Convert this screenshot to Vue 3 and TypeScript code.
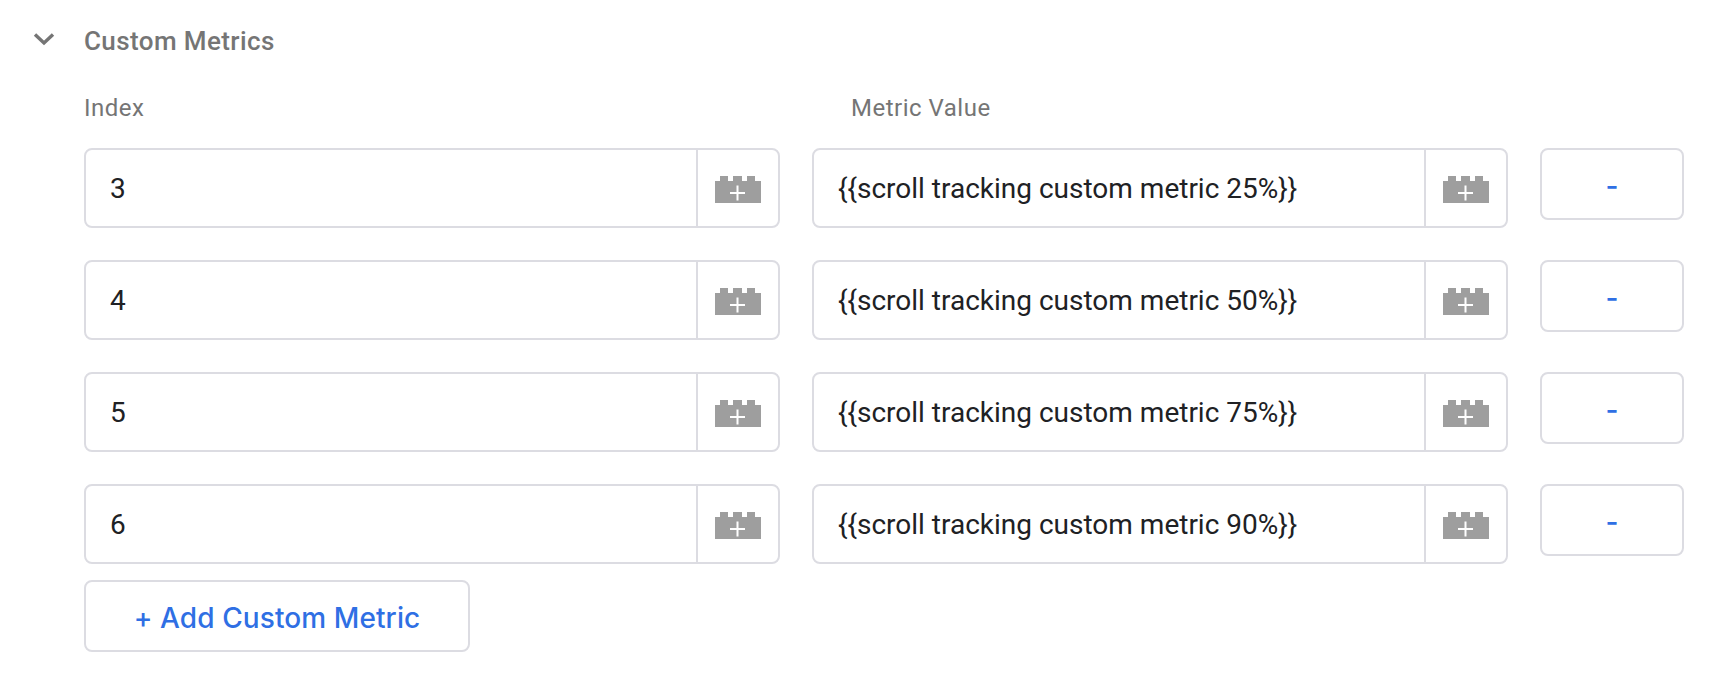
<script setup lang="ts">
const rows = [
  { index: '3', value: '{{scroll tracking custom metric 25%}}' },
  { index: '4', value: '{{scroll tracking custom metric 50%}}' },
  { index: '5', value: '{{scroll tracking custom metric 75%}}' },
  { index: '6', value: '{{scroll tracking custom metric 90%}}' },
]
</script>

<template>
  <main class="page">
    <header class="head">
      <svg class="chevron" width="22" height="14" viewBox="0 0 22 14" aria-hidden="true">
        <path d="M2 2.5 L11 11 L20 2.5" fill="none" stroke="#757575" stroke-width="3.4" />
      </svg>
      <h2 class="title">Custom Metrics</h2>
    </header>
    <div class="labels">
      <span class="label-index">Index</span>
      <span class="label-value">Metric Value</span>
    </div>
    <div class="rows">
      <div v-for="row in rows" :key="row.index" class="row">
        <div class="field">
          <span class="text">{{ row.index }}</span>
          <span class="var">
            <svg class="brick" width="46" height="27" viewBox="0 0 46 27" aria-hidden="true">
              <path d="M0 27V5H5V0H13V5H18V0H27V5H32V0H40V5H46V27Z" fill="#9e9e9e" />
              <path d="M22.5 9.5V24.5M15 17H30" stroke="#fff" stroke-width="2" />
            </svg>
          </span>
        </div>
        <div class="field">
          <span class="text">{{ row.value }}</span>
          <span class="var">
            <svg class="brick" width="46" height="27" viewBox="0 0 46 27" aria-hidden="true">
              <path d="M0 27V5H5V0H13V5H18V0H27V5H32V0H40V5H46V27Z" fill="#9e9e9e" />
              <path d="M22.5 9.5V24.5M15 17H30" stroke="#fff" stroke-width="2" />
            </svg>
          </span>
        </div>
        <button class="btn remove" type="button">-</button>
      </div>
    </div>
    <button class="btn add" type="button">+ Add Custom Metric</button>
  </main>
</template>

<style scoped>
.page {
  width: 1724px;
  height: 682px;
  box-sizing: border-box;
  padding: 26px 0 0 84px;
  background: #fff;
  font-family: Roboto, "Liberation Sans", sans-serif;
}
.head {
  display: flex;
  align-items: center;
  height: 30px;
  position: relative;
}
.chevron {
  position: absolute;
  left: -51px;
  top: 6px;
}
.title {
  margin: 0;
  font-size: 26px;
  font-weight: 500;
  letter-spacing: 0.4px;
  line-height: 30px;
  color: #757575;
}
.labels {
  display: flex;
  margin-top: 37px;
  height: 30px;
  align-items: center;
  font-size: 24px;
  letter-spacing: 0.5px;
  color: #757575;
}
.label-index {
  width: 767px;
}
.rows {
  margin-top: 25px;
  display: flex;
  flex-direction: column;
  gap: 32px;
}
.row {
  display: flex;
  align-items: flex-start;
  gap: 32px;
}
.field {
  box-sizing: border-box;
  width: 696px;
  height: 80px;
  display: flex;
  align-items: stretch;
  border: 2px solid #dcdce2;
  border-radius: 8px;
}
.text {
  flex: 1;
  display: flex;
  align-items: center;
  padding-left: 24px;
  font-size: 28px;
  color: #202124;
  white-space: nowrap;
}
.var {
  width: 80px;
  flex: none;
  border-left: 2px solid #dcdce2;
  display: flex;
  align-items: center;
  justify-content: center;
}
.brick {
  margin-top: 3px;
}
.btn {
  box-sizing: border-box;
  background: #fff;
  border: 2px solid #dcdce2;
  border-radius: 8px;
  height: 72px;
  padding: 4px 0 0;
  color: #2f6fe4;
}
.remove {
  width: 144px;
  font-family: Inter, Roboto, sans-serif;
  font-size: 28px;
  font-weight: 500;
}
.add {
  display: block;
  width: 386px;
  margin-top: 16px;
  font-family: Inter, Roboto, sans-serif;
  font-size: 28px;
  font-weight: 500;
  letter-spacing: 0.1px;
}
</style>
